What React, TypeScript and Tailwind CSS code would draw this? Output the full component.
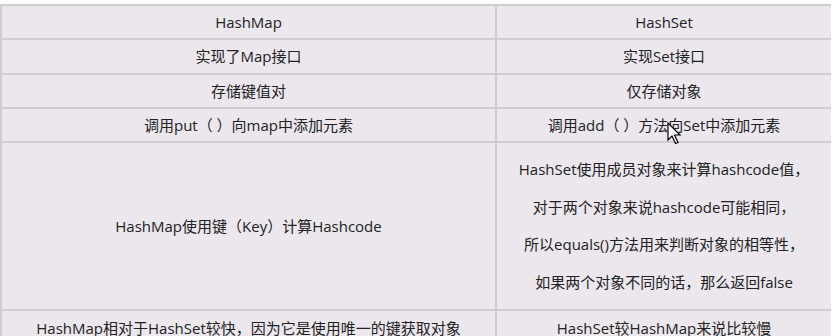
const rows: { left: string; right: string[]; h: string }[] = [
  { left: "HashMap", right: ["HashSet"], h: "h-[34px]" },
  { left: "实现了Map接口", right: ["实现Set接口"], h: "h-[35px]" },
  { left: "存储键值对", right: ["仅存储对象"], h: "h-[34px]" },
  { left: "调用put（ ）向map中添加元素", right: ["调用add（ ）方法向Set中添加元素"], h: "h-[34px]" },
  {
    left: "HashMap使用键（Key）计算Hashcode",
    right: [
      "HashSet使用成员对象来计算hashcode值，",
      "对于两个对象来说hashcode可能相同，",
      "所以equals()方法用来判断对象的相等性，",
      "如果两个对象不同的话，那么返回false",
    ],
    h: "h-[168px]",
  },
  {
    left: "HashMap相对于HashSet较快，因为它是使用唯一的键获取对象",
    right: ["HashSet较HashMap来说比较慢"],
    h: "h-[36px]",
  },
]

function Cursor() {
  return (
    <svg
      className="absolute left-[667px] top-[122px]"
      width="16"
      height="24"
      viewBox="0 0 16 24"
    >
      <path
        d="M1 1 L1 18 L5 14 L8.5 21.5 L11 20.5 L7.5 13 L13 13 Z"
        fill="#fff"
        stroke="#000"
        strokeWidth="1.2"
        strokeLinejoin="miter"
      />
    </svg>
  )
}

export default function App() {
  return (
    <div className="relative w-[835px] h-[336px] overflow-hidden bg-white pt-[4px]">
      <div
        className="w-[831px] bg-[#ebe7ed] border-t-2 border-l-2 border-[#cfccd2] text-[15px] text-[#222]"
        style={{ fontFamily: '"Open Sans", "Noto Sans CJK SC", sans-serif' }}
      >
        {rows.map((row, i) => (
          <div key={i} className={`flex border-b-2 border-[#cfccd2] ${row.h}`}>
            <div className="w-[495px] flex items-center justify-center border-r-2 border-[#cfccd2] whitespace-nowrap">
              {row.left}
            </div>
            <div className="flex-1 flex flex-col items-center justify-center whitespace-nowrap">
              {row.right.map((line, j) => (
                <div key={j} className={row.right.length > 1 ? "leading-[37.5px]" : ""}>
                  {line}
                </div>
              ))}
            </div>
          </div>
        ))}
      </div>
      <Cursor />
    </div>
  )
}
